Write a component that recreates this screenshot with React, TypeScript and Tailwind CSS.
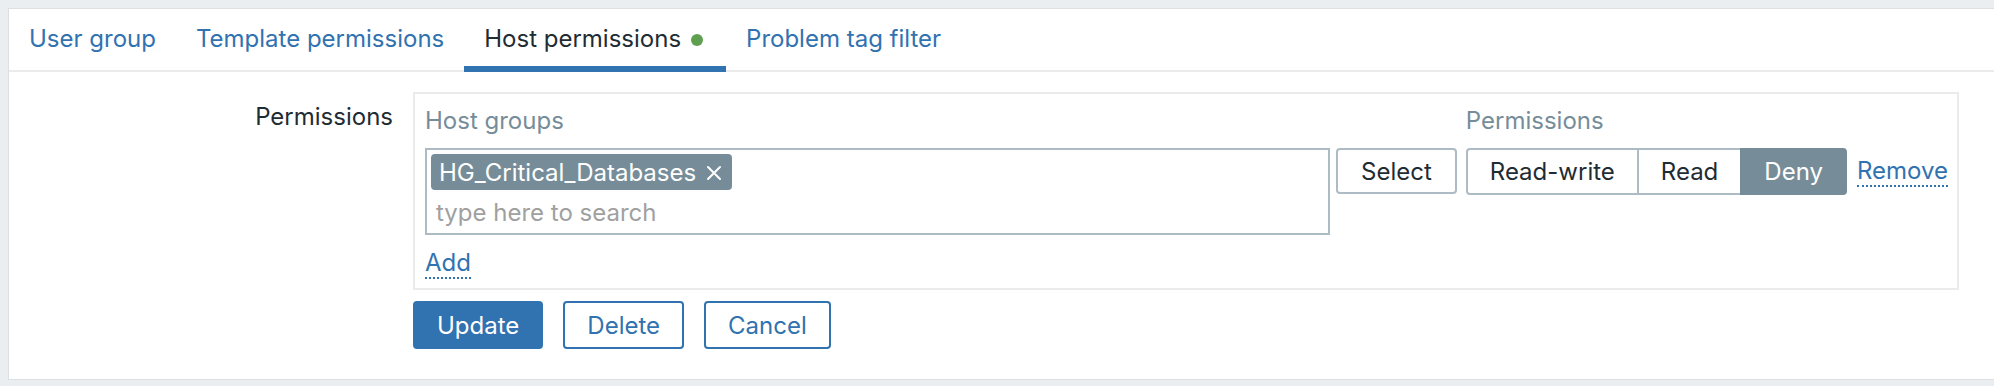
import React from "react";

function Tab({ label, active, dot }: { label: string; active?: boolean; dot?: boolean }) {
  return (
    <div
      className={
        active
          ? "relative flex items-center gap-[10px] pl-[20px] pr-[23px] pb-[2px] text-[#1f2c33] after:content-[''] after:absolute after:left-0 after:right-0 after:bottom-[-2px] after:h-[6px] after:bg-[#3172b0]"
          : "relative flex items-center gap-[10px] px-[20px] pb-[2px] text-[#3172b0]"
      }
    >
      <span className="leading-[normal]">{label}</span>
      {dot && <span className="inline-block w-[12px] h-[12px] mt-[3px] rounded-full bg-[#5ea04f]" />}
    </div>
  );
}

export default function App() {
  return (
    <div className="w-[1994px] h-[386px] bg-[#ebeef0] pt-[8px] pl-[8px] pb-[6px] font-['Inter','Liberation_Sans',sans-serif] text-[24px] text-[#1f2c33] overflow-hidden">
      <div className="h-full bg-white border-l border-t border-b border-[#dde0e3] flex flex-col">
        <div className="flex h-[63px] border-b-2 border-[#ebebeb]">
          <Tab label="User group" />
          <Tab label="Template permissions" />
          <Tab label="Host permissions" active dot />
          <Tab label="Problem tag filter" />
        </div>

        <div className="grid grid-cols-[384px_1fr] gap-x-[20px] gap-y-[11px] pt-[20px] pr-[35px]">
          <div className="text-right pt-[10px] leading-[normal]">Permissions</div>

          <div className="border-2 border-[#ebebeb] pl-[10px] pr-[9px] pt-[12px] pb-[9px]">
            <div className="grid grid-cols-[1fr_auto_auto] gap-y-[13px] leading-[29px]">
              <div className="text-[#768d99]">Host groups</div>
              <div className="pl-[9px] text-[#768d99]">Permissions</div>
              <div />

              <div className="flex items-start">
                <div className="flex-1 h-[87px] border-2 border-[#acbbc4] px-[4px] pt-[4px] pb-[3px] flex flex-col gap-[4px]">
                  <div className="flex">
                    <span className="inline-flex items-center h-[36px] pl-[8px] pr-[10px] gap-[10px] rounded-[4px] bg-[#768d99] text-white leading-[normal]">
                      HG_Critical_Databases
                      <svg width="16" height="16" viewBox="0 0 16 16" className="mt-[1px]">
                        <path d="M2 2 L14 14 M14 2 L2 14" stroke="white" strokeWidth="2" strokeLinecap="round" fill="none" />
                      </svg>
                    </span>
                  </div>
                  <div className="h-[36px] flex items-center pl-[5px] text-[#a0a0a0] leading-[normal]">type here to search</div>
                </div>
                <button className="ml-[6px] h-[46px] px-[23px] border-2 border-[#acbbc4] rounded-[4px] bg-white text-[#1f2c33] leading-[normal]">
                  Select
                </button>
              </div>

              <div className="pl-[9px]">
                <div className="flex h-[47px] leading-[normal]">
                  <div className="flex items-center px-[22px] border-2 border-[#acbbc4] rounded-l-[4px]">Read-write</div>
                  <div className="flex items-center px-[22px] border-y-2 border-[#acbbc4]">Read</div>
                  <div className="flex items-center px-[22px] border-2 border-[#768d99] bg-[#768d99] text-white rounded-r-[4px]">Deny</div>
                </div>
              </div>

              <div className="pl-[10px] h-[47px] flex items-center">
                <span className="leading-[normal] text-[#3172b0] border-b-2 border-dotted border-[#3172b0]">Remove</span>
              </div>

              <div className="col-span-3">
                <span className="inline-block text-[#3172b0] border-b-2 border-dotted border-[#3172b0]">Add</span>
              </div>
            </div>
          </div>

          <div />
          <div className="flex gap-[20px] leading-[normal]">
            <button className="h-[48px] px-[22px] border-2 border-[#3172b0] bg-[#3172b0] text-white rounded-[4px]">Update</button>
            <button className="h-[48px] px-[22px] border-2 border-[#3172b0] bg-white text-[#3172b0] rounded-[4px]">Delete</button>
            <button className="h-[48px] px-[22px] border-2 border-[#3172b0] bg-white text-[#3172b0] rounded-[4px]">Cancel</button>
          </div>
        </div>
      </div>
    </div>
  );
}
